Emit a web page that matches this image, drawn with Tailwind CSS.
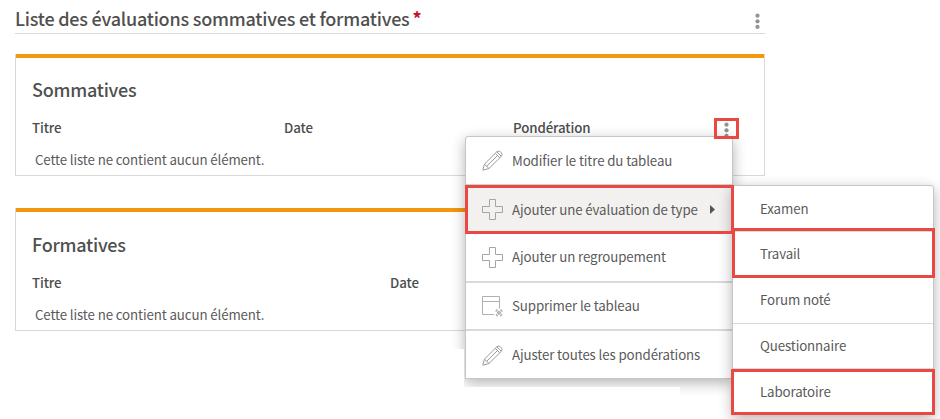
<!doctype html>
<html lang="fr">
<head>
  <meta charset="UTF-8">
  <meta name="viewport" content="width=device-width, initial-scale=1">
  <title>Liste des évaluations</title>
  <script src="https://cdn.jsdelivr.net/npm/@tailwindcss/browser@4"></script>
</head>
<body class="relative w-[940px] h-[419px] overflow-hidden bg-white text-[#5a5a5a] font-['Noto_Sans_CJK_SC',sans-serif] text-[13.3px] tracking-[-0.12px] leading-5 whitespace-nowrap">
  <main class="w-[750px] ml-[15px]">
    <!-- Heading -->
    <header class="flex justify-between h-[34px] border-b border-[#d9d9d9] pt-[6px] pr-[5px]">
      <h1 class="flex text-[18px] leading-6 tracking-[-0.22px] font-medium text-[#505050]">Liste des évaluations sommatives et formatives<span class="ml-[3px] font-bold text-[#c8102e]">*</span></h1>
      <svg class="mt-[7px]" width="5" height="17" fill="#939393"><circle cx="2.5" cy="2.7" r="2.1"/><circle cx="2.5" cy="8.3" r="2.1"/><circle cx="2.5" cy="13.9" r="2.1"/></svg>
    </header>

    <!-- Sommatives -->
    <section class="mt-5 h-[122px] border-x border-b border-[#d9d9d9]">
      <div class="h-1 bg-[#f39711]"></div>
      <h2 class="pt-[19px] pl-4 text-[18px] leading-6 tracking-[-0.25px] font-medium text-[#505050]">Sommatives</h2>
      <div class="mt-[17px] pl-4 flex font-medium text-[#4c4c4c]">
        <span class="w-[252px]">Titre</span>
        <span class="w-[229px]">Date</span>
        <span class="w-[211px]">Pondération</span>
        <svg class="mt-[4px]" width="5" height="17" fill="#939393"><circle cx="2.5" cy="2.7" r="2.1"/><circle cx="2.5" cy="8.3" r="2.1"/><circle cx="2.5" cy="13.9" r="2.1"/></svg>
      </div>
      <p class="mt-[11px] pl-[19px]">Cette liste ne contient aucun élément.</p>
    </section>

    <!-- Formatives -->
    <section class="mt-8 h-[123px] border-x border-b border-[#d9d9d9]">
      <div class="h-1 bg-[#f39711]"></div>
      <h2 class="pt-5 pl-4 text-[18px] leading-6 tracking-[-0.25px] font-medium text-[#505050]">Formatives</h2>
      <div class="mt-[17px] pl-4 flex font-medium text-[#4c4c4c]">
        <span class="w-[358px]">Titre</span>
        <span>Date</span>
      </div>
      <p class="mt-3 pl-[19px]">Cette liste ne contient aucun élément.</p>
    </section>
  </main>

  <!-- Menu -->
  <div class="absolute left-[465px] top-[136px] w-[268px] h-[243px] rounded-t-[3px] border border-[#c6c6c6] bg-white shadow-[0_4px_14px_rgba(0,0,0,0.3)]">
    <div class="flex items-center h-12 pl-4 border-b border-[#d0d0d0]">
      <svg class="mr-[9px]" width="21" height="21" viewBox="0 0 21 21" fill="none" stroke="#9c9c9c"><path d="M.8 20.2l1.6-6L14.8 1.8q1.8-1.7 3.7.1l.8.8q1.7 1.8 0 3.6L7 18.5zM2.4 14.2l4.6 4.3M13.3 3.3l4.5 4.5M14.8 1.8l4.5 4.5M4.8 16.2L15.5 5.5"/></svg>
      <span>Modifier le titre du tableau</span>
    </div>
    <div class="flex items-center h-[49px] pl-4 bg-[#f2f1ef]">
      <svg class="mr-[9px]" width="21" height="21" fill="none" stroke="#a5a5a5"><path d="M7.5.5h6v7h7v6h-7v7h-6v-7h-7v-6h7z"/></svg>
      <span>Ajouter une évaluation de type</span>
      <svg class="ml-3" width="5" height="9" fill="#555"><path d="M0 0l5 4.5L0 9z"/></svg>
    </div>
    <div class="flex items-center h-[49px] pl-4 border-b-2 border-[#d9d9d9]">
      <svg class="mr-[9px]" width="21" height="21" fill="none" stroke="#a5a5a5"><path d="M7.5.5h6v7h7v6h-7v7h-6v-7h-7v-6h7z"/></svg>
      <span class="pb-[2px]">Ajouter un regroupement</span>
    </div>
    <div class="flex items-center h-12 pl-4 border-b-2 border-[#d9d9d9]">
      <svg class="mr-[9px]" width="21" height="21" fill="none" stroke="#b0b0b0"><path d="M12 18.5H.5V.5h17v12M.5 5.5h17"/><path d="M14 14l6 6M20 14l-6 6" stroke-width="2.6" stroke-dasharray="1.5 .7"/></svg>
      <span>Supprimer le tableau</span>
    </div>
    <div class="flex items-center h-12 pl-4">
      <svg class="mr-[9px]" width="21" height="21" viewBox="0 0 21 21" fill="none" stroke="#9c9c9c"><path d="M.8 20.2l1.6-6L14.8 1.8q1.8-1.7 3.7.1l.8.8q1.7 1.8 0 3.6L7 18.5zM2.4 14.2l4.6 4.3M13.3 3.3l4.5 4.5M14.8 1.8l4.5 4.5M4.8 16.2L15.5 5.5"/></svg>
      <span>Ajuster toutes les pondérations</span>
    </div>
  </div>
  <!-- Shadow cut-offs -->
  <div class="absolute left-0 top-[349px] w-[464px] h-[70px] bg-white"></div>
  <div class="absolute left-[464px] top-[387px] w-[216px] h-8 bg-white"></div>

  <!-- Submenu -->
  <div class="absolute left-[732px] top-[185px] w-[202px] h-[230px] rounded-t-[3px] border border-[#c6c6c6] bg-white shadow-[0_4px_14px_rgba(0,0,0,0.3)]">
    <div class="flex items-center h-[46px] pl-[27px] border-b border-[#d9d9d9]">Examen</div>
    <div class="flex items-center h-[46px] pl-[27px] pb-[2px] border-b border-[#d9d9d9]">Travail</div>
    <div class="flex items-center h-[46px] pl-[27px] pb-[2px] border-b border-[#d9d9d9]">Forum noté</div>
    <div class="flex items-center h-[45px] pl-[27px] border-b border-[#d9d9d9]">Questionnaire</div>
    <div class="flex items-center h-[46px] pl-[27px]">Laboratoire</div>
  </div>

  <!-- Highlights -->
  <div class="absolute left-[714px] top-[118px] w-[25px] h-[21px] border-3 border-[#ea4843]"></div>
  <div class="absolute left-[465px] top-[185px] w-[269px] h-[49px] border-3 border-[#ea4843]"></div>
  <div class="absolute left-[732px] top-[228px] w-[203px] h-[50px] border-3 border-[#ea4843]"></div>
  <div class="absolute left-[731px] top-[369px] w-[204px] h-[46px] border-3 border-[#ea4843]"></div>
</body>
</html>
